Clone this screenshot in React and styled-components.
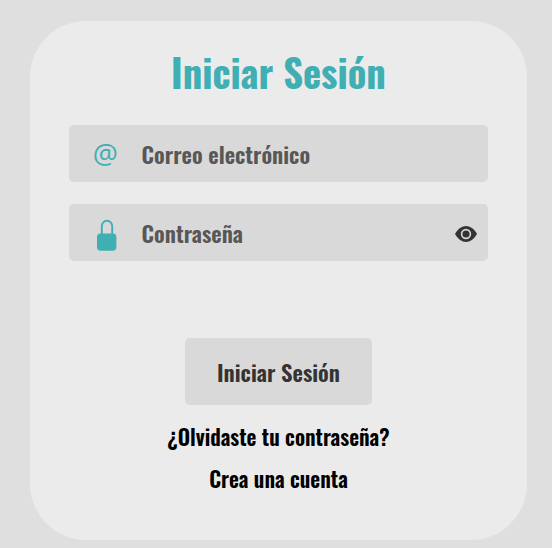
import React from "react";
import styled, { createGlobalStyle } from "styled-components";

const GlobalStyle = createGlobalStyle`
  * { box-sizing: border-box; }
  body {
    margin: 0;
    background: #dfdfdf;
    font-family: Oswald, "Liberation Sans", sans-serif;
  }
`;

const Page = styled.main`
  height: 548px;
  padding: 21px 25px 8px 30px;
  overflow: hidden;
`;

const Card = styled.form`
  display: flex;
  flex-direction: column;
  align-items: center;
  height: 519px;
  padding: 21px 39px 0;
  border-radius: 56px;
  background: #ebebeb;
`;

const Title = styled.h1`
  margin: 0 0 23px;
  height: 60px;
  line-height: 60px;
  font-size: 38.6px;
  font-weight: 700;
  color: #40afb3;
`;

const Field = styled.label`
  display: flex;
  align-items: center;
  width: 100%;
  height: 57px;
  margin-bottom: 22px;
  padding-right: 10px;
  border-radius: 5px;
  background: #d9d9d9;
`;

const FieldIcon = styled.span`
  display: flex;
  justify-content: center;
  flex: none;
  width: 72.6px;
  padding: ${(p) => (p.$lowered ? "2px 0 0 1.4px" : "0")};
  color: #40afb3;
  font: 400 28px/38px "Open Sans", sans-serif;
`;

const Input = styled.input`
  flex: 1;
  min-width: 0;
  height: 57px;
  padding: 0;
  border: 0;
  outline: 0;
  background: transparent;
  color: #333333;
  font: 600 22.65px Oswald, sans-serif;
  &::placeholder { color: #575757; opacity: 1; }
`;

const Toggle = styled.button`
  display: flex;
  flex: none;
  padding: 2px 0 0;
  border: 0;
  background: none;
  color: #333333;
`;

const Submit = styled.button`
  width: 187px;
  height: 67px;
  margin: 55px 0 10px;
  padding: 0;
  border: 0;
  border-radius: 5px;
  background: #d9d9d9;
  color: #333333;
  font: 600 22.7px Oswald, sans-serif;
`;

const Link = styled.a`
  height: 42px;
  line-height: 42px;
  font-size: 21.5px;
  font-weight: 600;
  color: #000000;
`;

const AtSign = styled.span`
  padding-bottom: 1px;
`;

function LockIcon() {
  return (
    <svg width="22" height="34" viewBox="0 0 22 34" fill="currentColor">
      <path d="M6.8 18V9a5.2 5.2 0 0 1 10.4 0v9" fill="none" stroke="currentColor" strokeWidth="1.9" />
      <rect x="2" y="16.5" width="19.4" height="17.2" rx="3.6" />
    </svg>
  );
}

function EyeIcon() {
  return (
    <svg width="24" height="24" viewBox="0 0 24 24" fill="none">
      <path d="M1 12C4 6.8 8 4.1 12 4.1S20 6.8 23 12C20 17.2 16 19.9 12 19.9S4 17.2 1 12Z" fill="currentColor" />
      <circle cx="12" cy="12" r="4.4" stroke="#d9d9d9" strokeWidth="1.6" />
    </svg>
  );
}

export default function App() {
  return (
    <>
      <GlobalStyle />
      <Page>
        <Card>
          <Title>Iniciar Sesión</Title>
          <Field>
            <FieldIcon><AtSign>@</AtSign></FieldIcon>
            <Input type="email" placeholder="Correo electrónico" />
          </Field>
          <Field>
            <FieldIcon $lowered><LockIcon /></FieldIcon>
            <Input type="password" placeholder="Contraseña" />
            <Toggle type="button" aria-label="Mostrar contraseña">
              <EyeIcon />
            </Toggle>
          </Field>
          <Submit type="button">Iniciar Sesión</Submit>
          <Link>¿Olvidaste tu contraseña?</Link>
          <Link>Crea una cuenta</Link>
        </Card>
      </Page>
    </>
  );
}
